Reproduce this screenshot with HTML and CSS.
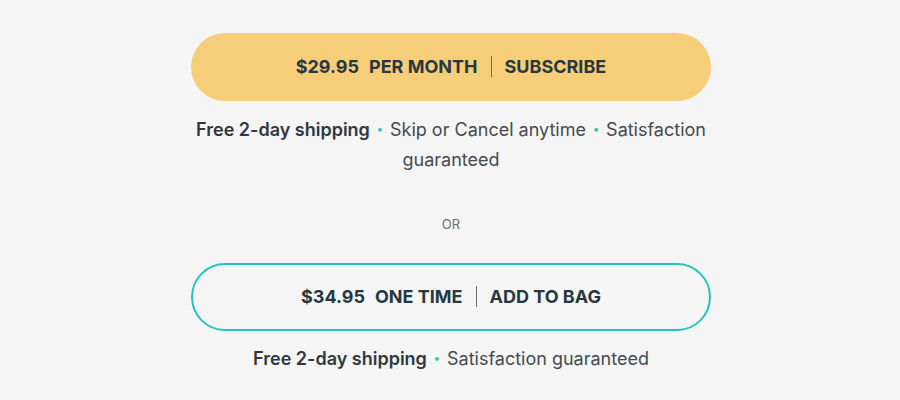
FILE: index.html
```html
<!DOCTYPE html>
<html>
<head>
<meta charset="utf-8">
<link rel="stylesheet" href="styles.css">
</head>
<body>
<div class="offer">
  <button class="btn btn-sub">
    <span class="price">$29.95</span><span class="term">PER MONTH</span><span class="sep"></span><span class="action">SUBSCRIBE</span>
  </button>
  <p class="perks"><strong>Free 2-day shipping</strong> <span class="dot">•</span> <span>Skip or Cancel anytime</span> <span class="dot">•</span> <span>Satisfaction</span> <span>guaranteed</span></p>
  <div class="or">OR</div>
  <button class="btn btn-once">
    <span class="price">$34.95</span><span class="term">ONE TIME</span><span class="sep"></span><span class="action">ADD TO BAG</span>
  </button>
  <p class="perks perks-2"><strong>Free 2-day shipping</strong> <span class="dot">•</span> <span>Satisfaction guaranteed</span></p>
</div>
</body>
</html>
```
FILE: styles.css
```css
html, body {
  margin: 0;
  padding: 0;
  background: #f5f5f5;
}
body {
  font-family: Inter, "Open Sans", sans-serif;
  color: #333c42;
  padding-left: 2px;
}
.offer {
  width: 520px;
  margin: 0 auto;
  padding-top: 33px;
  display: flex;
  flex-direction: column;
  align-items: stretch;
}
.btn {
  height: 68px;
  border-radius: 34px;
  display: flex;
  align-items: center;
  justify-content: center;
  font-family: Inter, sans-serif;
  font-weight: 700;
  font-size: 18px;
  color: #263840;
  padding: 0 0 2px;
  cursor: pointer;
}
.btn-sub {
  background: #f6cd78;
  border: none;
}
.btn-once {
  background: #f5f5f5;
  border: 2px solid #26c3bc;
  margin-top: 31px;
}
.price {
  margin-right: 10px;
}
.sep {
  display: inline-block;
  width: 1px;
  height: 21px;
  background: #6b6e6a;
  margin: 0 13px;
}
.perks {
  margin: 14px 0 0;
  text-align: center;
  font-size: 18px;
  line-height: 30px;
  color: #444b50;
}
.perks strong {
  font-weight: 600;
  color: #30383d;
}
.dot {
  display: inline-block;
  width: 8px;
  text-align: center;
  line-height: 12px;
  color: #3bbfc0;
  font-size: 12px;
  margin: 0 1px;
  vertical-align: 3px;
}
.or {
  margin-top: 41px;
  text-align: center;
  font-size: 13px;
  line-height: 16px;
  color: #6e6e6e;
}
.perks-2 {
  margin-top: 13px;
}
```
